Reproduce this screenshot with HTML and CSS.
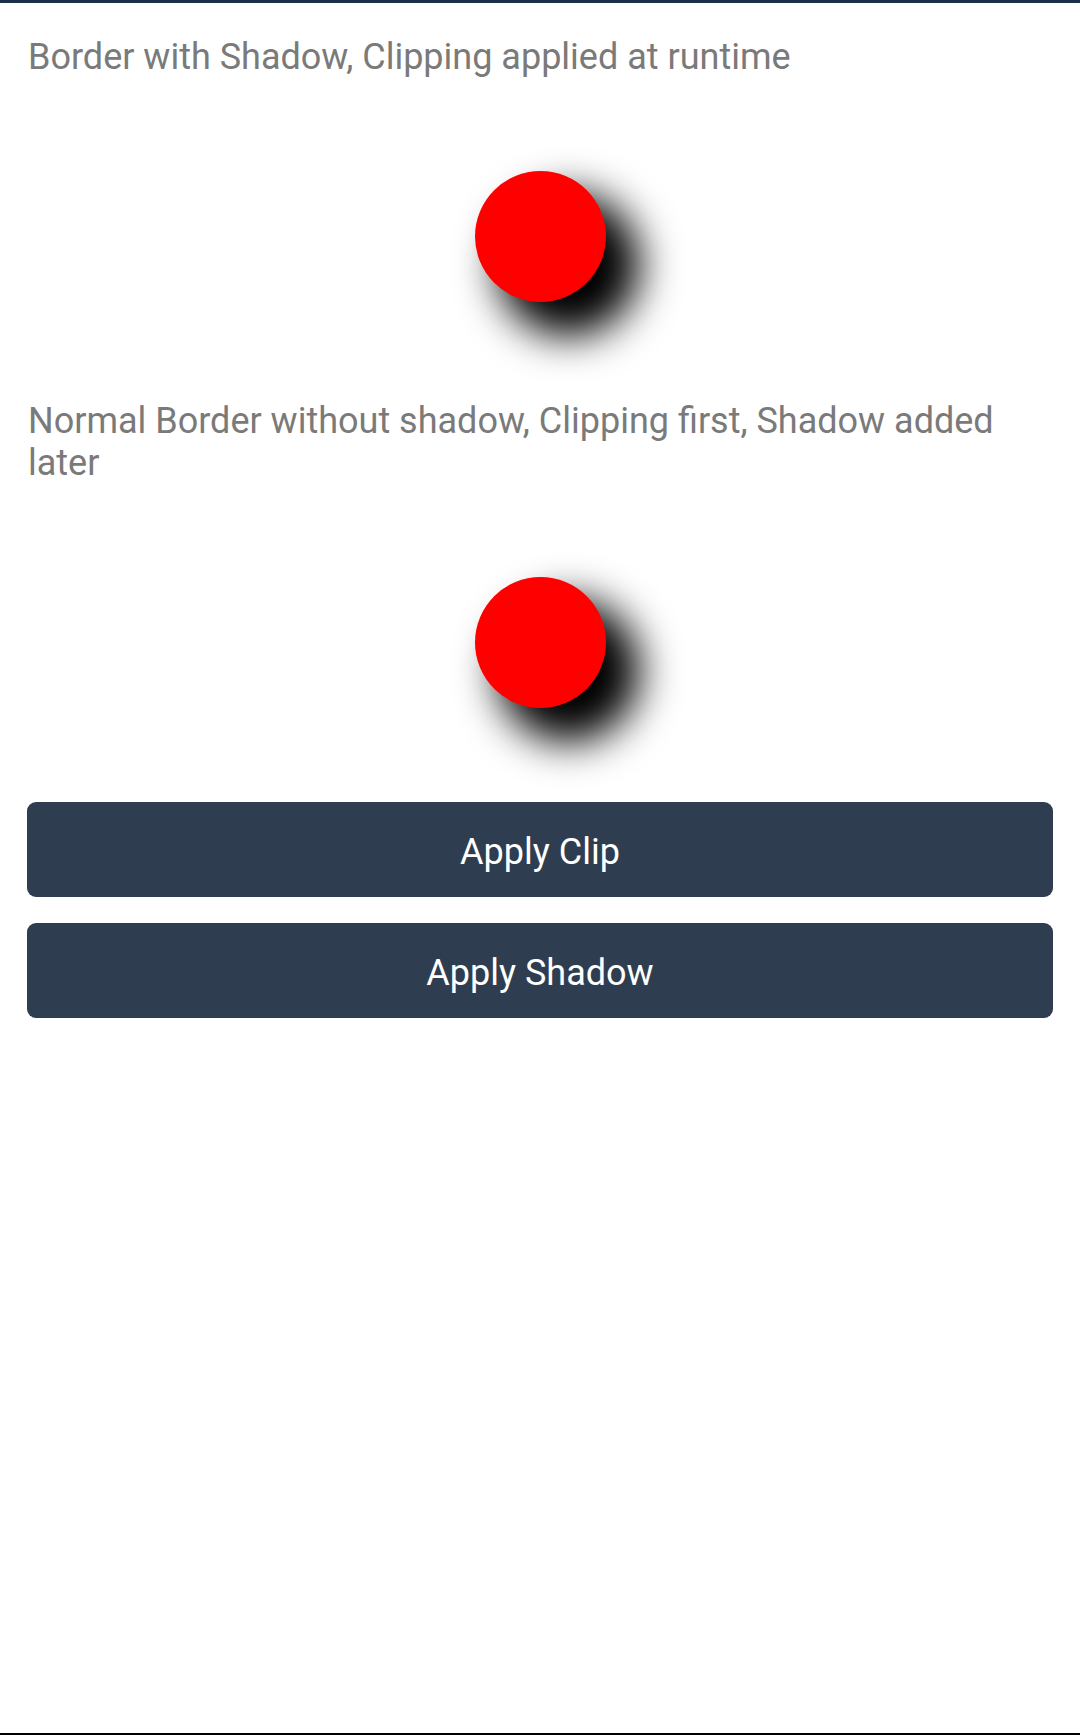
FILE: index.html
```html
<!DOCTYPE html>
<html>
<head>
<meta charset="utf-8">
<link rel="stylesheet" href="styles.css">
</head>
<body>
<div class="screen">
  <p class="label first">Border with Shadow, Clipping applied at runtime</p>
  <div class="stage stage-one"><div class="dot"></div></div>
  <p class="label">Normal Border without shadow, Clipping first, Shadow added later</p>
  <div class="stage stage-two"><div class="dot"></div></div>
  <button class="btn">Apply Clip</button>
  <button class="btn">Apply Shadow</button>
</div>
</body>
</html>
```
FILE: styles.css
```css
html, body {
  margin: 0;
  padding: 0;
  background: #ffffff;
}
.screen {
  box-sizing: border-box;
  height: 1735px;
  border-top: 3px solid #1c2f47;
  border-bottom: 2px solid #000000;
  padding: 0 27px;
  display: flex;
  flex-direction: column;
  font-family: Roboto, "Noto Sans", sans-serif;
}
.label {
  margin: 0;
  font-size: 36px;
  line-height: 42px;
  color: #7a7a7a;
  padding-left: 1px;
}
.label.first {
  margin-top: 33px;
}
.stage {
  display: flex;
  justify-content: center;
}
.stage-one {
  padding: 93px 0 98px;
}
.stage-two {
  padding: 93px 0 94px;
}
.dot {
  width: 131px;
  height: 131px;
  border-radius: 50%;
  background: #ff0000;
  box-shadow: 28px 28px 40px 6px #000000;
}
.btn {
  display: block;
  width: 100%;
  height: 95px;
  border: none;
  border-radius: 9px;
  background: #2e3e50;
  color: #ffffff;
  font-family: Roboto, "Noto Sans", sans-serif;
  font-size: 36px;
  margin: 0 0 26px;
  padding: 5px 0 0;
}
```
